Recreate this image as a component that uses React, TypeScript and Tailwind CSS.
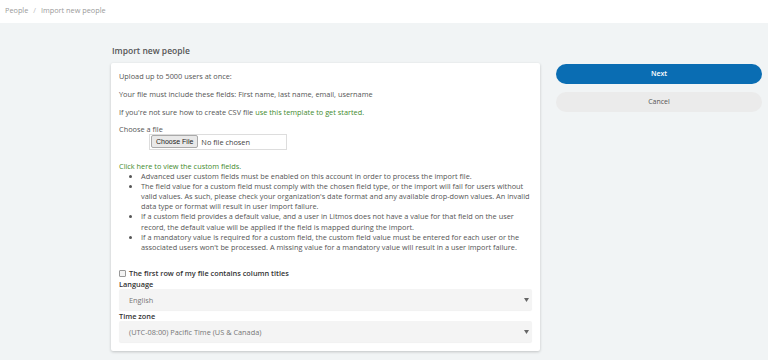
import React from "react";

function Caret() {
  return (
    <svg width="5" height="4" viewBox="0 0 5 4" className="mr-[3px]">
      <path d="M0 0 L5 0 L2.5 4 Z" fill="#666" />
    </svg>
  );
}

export default function App() {
  const font = { fontFamily: '"Open Sans", "Noto Sans", sans-serif' };
  return (
    <div className="w-[768px] h-[360px] bg-[#f1f4f5] overflow-hidden text-[#555]" style={font}>
      <div className="h-[23px] bg-white flex items-center pl-[5px] pb-[2px] text-[7.3px] text-[#9a9a9a]">
        <span>People</span>
        <span className="mx-[5px] text-[#bbb]">/</span>
        <span>Import new people</span>
      </div>
      <div className="flex pl-[111px] pr-[6px] pt-[20px]">
        <div className="w-[429px]">
          <div className="text-[8.5px] font-semibold text-[#555] pl-[1px] h-[20px] leading-[15px]">Import new people</div>
          <div className="bg-white rounded-[2px] shadow-[0_1px_3px_rgba(0,0,0,0.2)] pl-[8px] pr-[8px] pt-[7.5px] pb-[9px] text-[7.35px] leading-[10px]">
            <p className="mb-[8px]">Upload up to 5000 users at once:</p>
            <p className="mb-[8px]">Your file must include these fields: First name, last name, email, username</p>
            <p className="mb-[7px]">
              If you're not sure how to create CSV file{" "}
              <span className="text-[#3f8a2e]">use this template to get started.</span>
            </p>
            <p>Choose a file</p>
            <div className="ml-[30px] mt-0 w-[138px] h-[16px] border border-[#ddd] flex items-center pl-[1px]">
              <span className="h-[13px] px-[4px] bg-[#e9e9e9] border border-[#aaa] rounded-[2px] text-[7px] leading-[11px] text-[#222]" style={{ fontFamily: '"Liberation Sans", Arial, sans-serif' }}>
                Choose File
              </span>
              <span className="ml-[3px] text-[#444]">No file chosen</span>
            </div>
            <p className="mt-[11px] text-[#3f8a2e]">Click here to view the custom fields.</p>
            <ul className="pl-[22px] list-disc text-[#555] leading-[10.2px]">
              <li>Advanced user custom fields must be enabled on this account in order to process the import file.</li>
              <li>The field value for a custom field must comply with the chosen field type, or the import will fail for users without valid values. As such, please check your organization's date format and any available drop-down values. An invalid data type or format will result in user import failure.</li>
              <li>If a custom field provides a default value, and a user in Litmos does not have a value for that field on the user record, the default value will be applied if the field is mapped during the import.</li>
              <li>If a mandatory value is required for a custom field, the custom field value must be entered for each user or the associated users won't be processed. A missing value for a mandatory value will result in a user import failure.</li>
            </ul>
            <div className="mt-[16px] flex items-center font-semibold text-[#333] h-[10px]">
              <span className="w-[7px] h-[7px] border border-[#999] rounded-[1px] bg-[#f3f3f3] mr-[3px]"></span>
              The first row of my file contains column titles
            </div>
            <div className="mt-[1px] font-semibold text-[#333]">Language</div>
            <div className="h-[21px] bg-[#f4f4f4] rounded-[2px] flex items-center justify-between pl-[10px] text-[#777] shadow-[0_1px_1px_rgba(0,0,0,0.06)]">
              <span>English</span>
              <Caret />
            </div>
            <div className="mt-[1px] font-semibold text-[#333]">Time zone</div>
            <div className="h-[21px] bg-[#f4f4f4] rounded-[2px] flex items-center justify-between pl-[10px] text-[#777] shadow-[0_1px_1px_rgba(0,0,0,0.06)]">
              <span>(UTC-08:00) Pacific Time (US &amp; Canada)</span>
              <Caret />
            </div>
          </div>
        </div>
        <div className="ml-[16px] w-[206px] pt-[21px] flex flex-col gap-[8px]">
          <button className="h-[20px] rounded-full bg-[#0a6db3] text-white text-[7px] font-semibold">Next</button>
          <button className="h-[20px] rounded-full bg-[#ebebeb] text-[#555] text-[7px]">Cancel</button>
        </div>
      </div>
    </div>
  );
}
